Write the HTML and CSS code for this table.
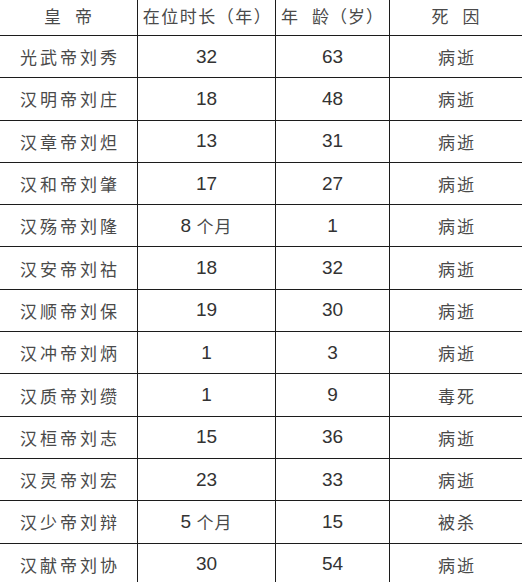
FILE: index.html
```html
<!DOCTYPE html>
<html lang="zh">
<head>
<meta charset="utf-8">
<title>东汉皇帝</title>
<link rel="stylesheet" href="styles.css">
</head>
<body>
<div class="grid">
  <div class="cell head spaced">皇 帝</div>
  <div class="cell head wide">在位时长（年）</div>
  <div class="cell head spaced">年 龄（岁）</div>
  <div class="cell head spaced">死 因</div>

  <div class="cell name">光武帝刘秀</div><div class="cell num">32</div><div class="cell num">63</div><div class="cell cause">病逝</div>
  <div class="cell name">汉明帝刘庄</div><div class="cell num">18</div><div class="cell num">48</div><div class="cell cause">病逝</div>
  <div class="cell name">汉章帝刘炟</div><div class="cell num">13</div><div class="cell num">31</div><div class="cell cause">病逝</div>
  <div class="cell name">汉和帝刘肇</div><div class="cell num">17</div><div class="cell num">27</div><div class="cell cause">病逝</div>
  <div class="cell name">汉殇帝刘隆</div><div class="cell num">8 <span class="cn">个月</span></div><div class="cell num">1</div><div class="cell cause">病逝</div>
  <div class="cell name">汉安帝刘祜</div><div class="cell num">18</div><div class="cell num">32</div><div class="cell cause">病逝</div>
  <div class="cell name">汉顺帝刘保</div><div class="cell num">19</div><div class="cell num">30</div><div class="cell cause">病逝</div>
  <div class="cell name">汉冲帝刘炳</div><div class="cell num">1</div><div class="cell num">3</div><div class="cell cause">病逝</div>
  <div class="cell name">汉质帝刘缵</div><div class="cell num">1</div><div class="cell num">9</div><div class="cell cause">毒死</div>
  <div class="cell name">汉桓帝刘志</div><div class="cell num">15</div><div class="cell num">36</div><div class="cell cause">病逝</div>
  <div class="cell name">汉灵帝刘宏</div><div class="cell num">23</div><div class="cell num">33</div><div class="cell cause">病逝</div>
  <div class="cell name">汉少帝刘辩</div><div class="cell num">5 <span class="cn">个月</span></div><div class="cell num">15</div><div class="cell cause">被杀</div>
  <div class="cell name">汉献帝刘协</div><div class="cell num">30</div><div class="cell num">54</div><div class="cell cause">病逝</div>
</div>
</body>
</html>
```

FILE: styles.css
```css
html, body {
  margin: 0;
  padding: 0;
  background: #ffffff;
  overflow: hidden;
}

.grid {
  display: grid;
  grid-template-columns: 137px 137px 113px 1fr;
  grid-template-rows: 35px repeat(13, 41.3px);
  gap: 1px;
  background: #1c1c1c;
  width: 522px;
}

.cell {
  background: #ffffff;
  display: flex;
  align-items: center;
  justify-content: center;
  font-family: "Noto Sans CJK SC", "Noto Sans", sans-serif;
  color: #4a4a4a;
  font-size: 17px;
  white-space: pre;
}

.head {
  padding-bottom: 4px;
}

.head.spaced {
  letter-spacing: 1px;
  word-spacing: 8px;
}

.head.wide {
  letter-spacing: 1.5px;
  padding-left: 2px;
}

.name {
  letter-spacing: 3px;
  padding-left: 3px;
}

.cause {
  letter-spacing: 2px;
  padding-left: 2px;
}

.num {
  font-family: "Liberation Sans", Arial, sans-serif;
  font-size: 19px;
  color: #333333;
}

.num .cn {
  font-family: "Noto Sans CJK SC", sans-serif;
  font-size: 17px;
  color: #4a4a4a;
  letter-spacing: 1px;
}
```
